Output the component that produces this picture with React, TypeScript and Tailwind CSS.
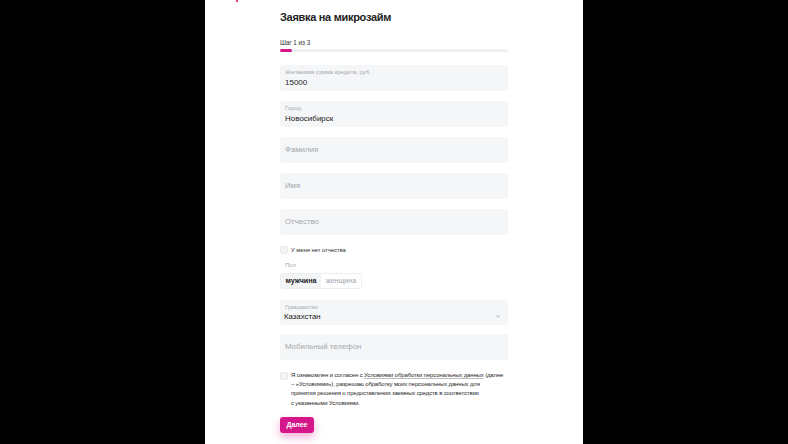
import React from "react";

const font = { fontFamily: '"Liberation Sans", Arial, sans-serif' };

const FilledField = ({ label, value }: { label: string; value: string }) => (
  <div className="h-[26px] rounded-[3px] bg-[#f5f6f8] pl-[5px] pt-[3px]">
    <div className="text-[6.1px] leading-[8px] tracking-[-0.1px] text-[#a7abb0]">{label}</div>
    <div className="mt-[1px] text-[8px] leading-[12px] text-[#222]">{value}</div>
  </div>
);

const EmptyField = ({ placeholder }: { placeholder: string }) => (
  <div className="flex h-[26px] items-center rounded-[3px] bg-[#f5f6f8] pl-[5px] text-[7.8px] text-[#a3a7ac]">
    {placeholder}
  </div>
);

const Checkbox = () => (
  <span className="mt-[1px] block h-[8px] w-[8px] shrink-0 rounded-[2px] border border-[#e6e8eb] bg-[#f3f4f6]" />
);

export default function App() {
  return (
    <div className="flex h-[444px] w-full justify-center overflow-hidden bg-black" style={font}>
      <div className="relative w-[378px] bg-white pl-[75px] pt-[9px]">
        <span className="absolute left-[31px] top-0 h-[2px] w-[2px] bg-[#e6405e]" />
        <div className="w-[228px]">
          <h1 className="text-[11px] font-bold leading-[16px] tracking-[-0.3px] text-[#222]">Заявка на микрозайм</h1>

          <div className="mt-[14px] text-[6.5px] leading-[8px] tracking-[-0.1px] text-[#333]">Шаг 1 из 3</div>
          <div className="mt-[2px] h-[3px] rounded-full bg-[#eff0f2]">
            <div className="h-[3px] w-[12px] rounded-full bg-[#d6168b]" />
          </div>

          <div className="mt-[13px] flex flex-col gap-[10px]">
            <FilledField label="Желаемая сумма кредита, руб." value="15000" />
            <FilledField label="Город" value="Новосибирск" />
            <EmptyField placeholder="Фамилия" />
            <EmptyField placeholder="Имя" />
            <EmptyField placeholder="Отчество" />
          </div>

          <div className="mt-[10px] flex items-start gap-[3px]">
            <Checkbox />
            <span className="text-[6px] leading-[10px] tracking-[-0.1px] text-[#333]">У меня нет отчества</span>
          </div>

          <div className="mt-[6px] pl-[5px] text-[6px] leading-[8px] text-[#a7abb0]">Пол</div>

          <div className="mt-[4px] flex h-[16px] w-[82px] overflow-hidden rounded-[3px] border border-[#eceef0] text-[7.2px]">
            <div className="flex w-[41px] items-center justify-center bg-[#f3f4f6] font-bold text-[#222]">мужчина</div>
            <div className="flex w-[41px] items-center justify-center text-[#a3a7ac]">женщина</div>
          </div>

          <div className="mt-[11px] flex h-[25px] items-center justify-between rounded-[3px] bg-[#f5f6f8] pl-[4px] pr-[8px]">
            <div>
              <div className="pl-[1px] text-[5.5px] leading-[7px] text-[#a7abb0]">Гражданство</div>
              <div className="text-[7.8px] leading-[11px] text-[#222]">Казахстан</div>
            </div>
            <svg width="4" height="3" viewBox="0 0 4 3" className="mt-[7px]">
              <path d="M0.5 0.5 L2 2.2 L3.5 0.5" fill="none" stroke="#9aa0a6" strokeWidth="0.8" />
            </svg>
          </div>

          <div className="mt-[9px]">
            <EmptyField placeholder="Мобильный телефон" />
          </div>

          <div className="mt-[11px] flex items-start gap-[3px]">
            <Checkbox />
            <p className="text-[6px] leading-[9.2px] tracking-[-0.15px] text-[#2a2a2a]">
              Я ознакомлен и согласен с{" "}
              <span className="underline decoration-[#bbb] underline-offset-1">Условиями обработки персональных данных</span>{" "}
              (далее
              <br />– «Условиями»), разрешаю обработку моих персональных данных для
              <br />
              принятия решения о предоставлении заемных средств в соответствии
              <br />с указанными Условиями.
            </p>
          </div>

          <button className="mt-[9px] flex h-[16px] w-[34px] items-center justify-center rounded-[3px] bg-[#d6168b] text-[7px] font-bold text-white shadow-[0_4px_8px_rgba(214,22,139,0.35)]">
            Далее
          </button>
        </div>
      </div>
    </div>
  );
}
